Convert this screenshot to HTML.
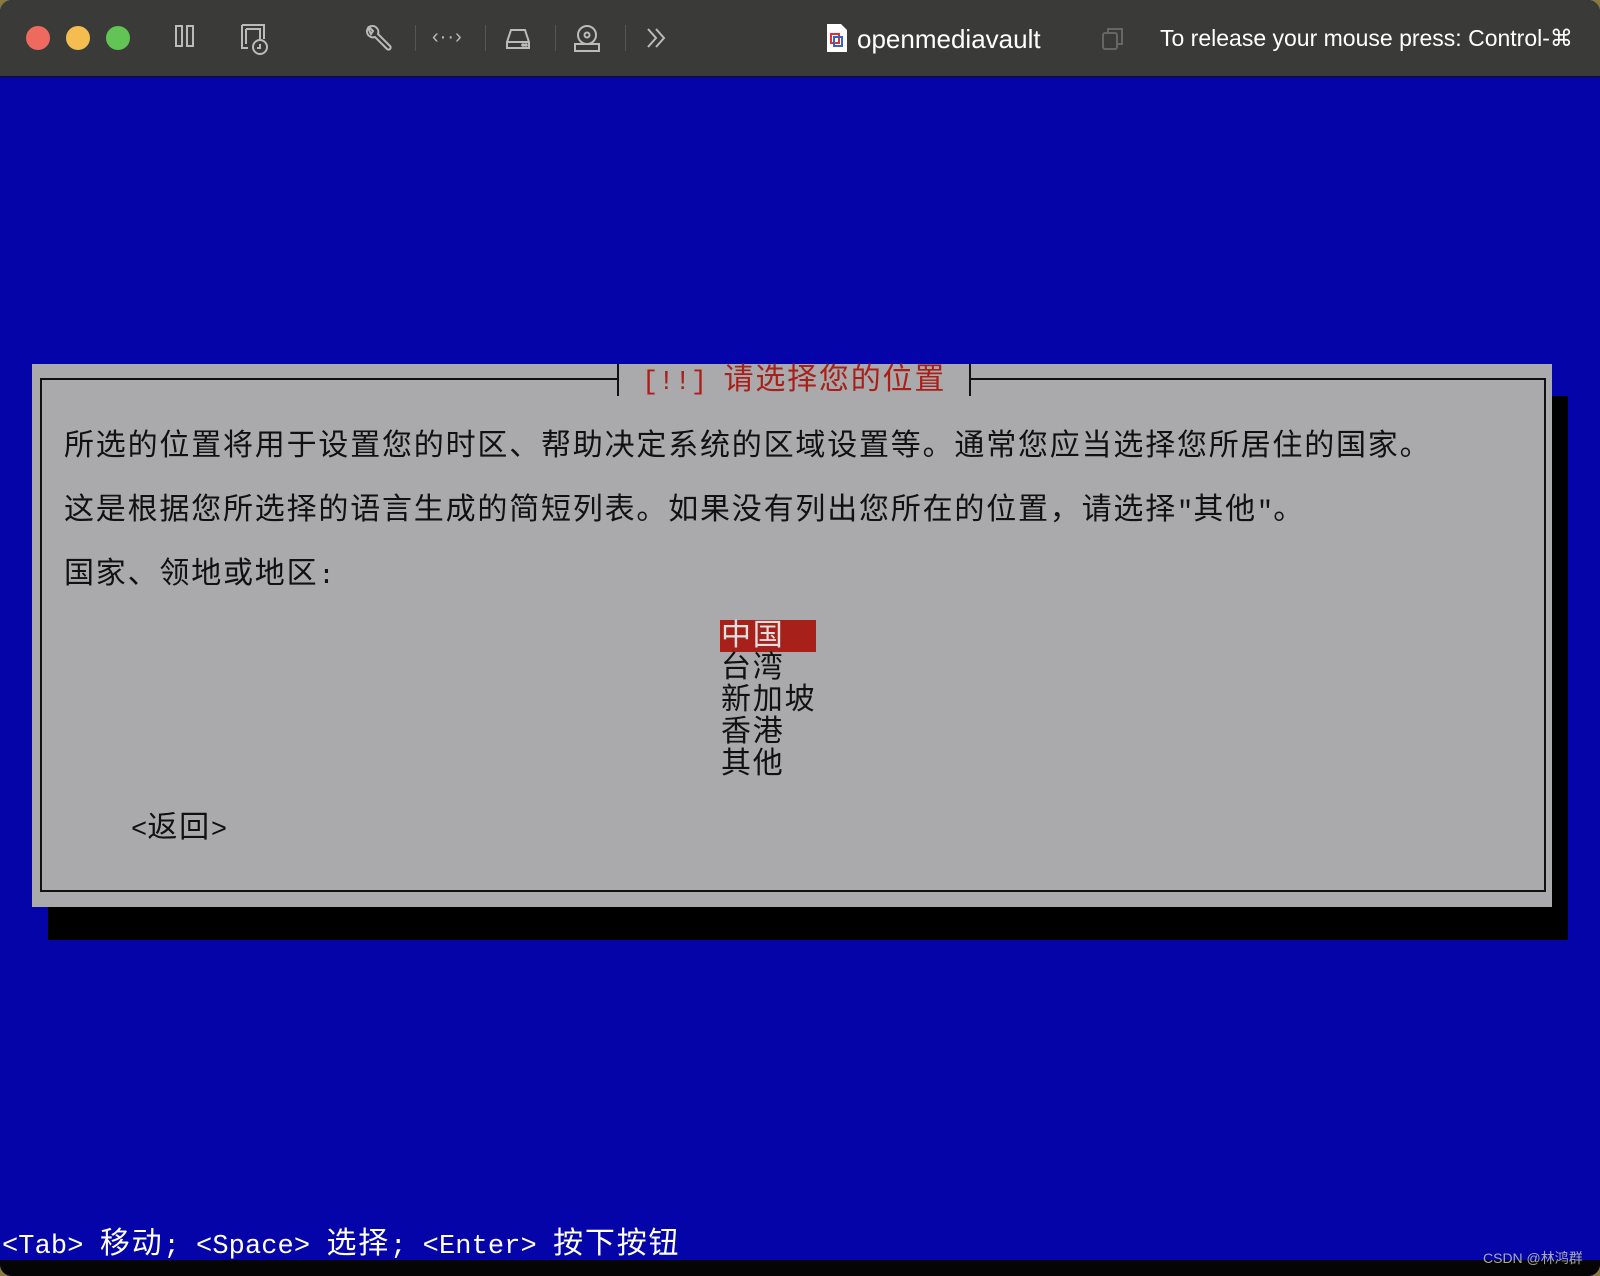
<!DOCTYPE html>
<html><head><meta charset="utf-8"><style>
html,body{margin:0;padding:0;width:1600px;height:1276px;overflow:hidden;background:#8a7a40;}
.win{position:absolute;left:0;top:0;width:1600px;height:1276px;border-radius:12px;overflow:hidden;background:#0404a8;}
.bar{position:absolute;left:0;top:0;width:1600px;height:76px;background:#3a3a39;border-bottom:1px solid #111;}
.dot{position:absolute;top:26px;width:24px;height:24px;border-radius:50%;}
.ic{position:absolute;top:22px;}
.t{position:absolute;font-family:"Liberation Sans",sans-serif;color:#fff;white-space:nowrap;}
.term{position:absolute;font-family:"Liberation Mono","WenQuanYi Zen Hei",monospace;white-space:nowrap;font-size:30px;line-height:32px;letter-spacing:1.8px;}
.l{font-size:27px;letter-spacing:0.1px;}
.sep{position:absolute;top:25px;width:1px;height:26px;background:#555;}
</style></head><body><div class="win">
<div class="bar">
<div class="dot" style="left:26px;background:#ee6a5e"></div>
<div class="dot" style="left:66px;background:#f5bd4f"></div>
<div class="dot" style="left:106px;background:#61c454"></div>
<svg class="ic" style="left:172px" width="28" height="32" viewBox="0 0 28 32" fill="none" stroke="#bbb" stroke-width="2"><rect x="4" y="4" width="6" height="20"/><rect x="15" y="4" width="6" height="20"/></svg>
<svg class="ic" style="left:240px" width="32" height="34" viewBox="0 0 32 34" fill="none" stroke="#bbb" stroke-width="2"><path d="M2 3h22v14M2 3v23h6M6 7h14v10M6 7v15"/><circle cx="20" cy="25" r="7"/><path d="M20 22v4h-3"/></svg>
<svg class="ic" style="left:362px" width="32" height="32" viewBox="0 0 32 32" fill="none" stroke="#bbb" stroke-width="2"><path d="M6 6a6 6 0 0 0 7 9l12 12a2 2 0 0 0 3-3L16 12a6 6 0 0 0-9-7l4 4-2 3z"/></svg>
<div class="sep" style="left:415px"></div>
<div class="t" style="left:432px;top:26px;color:#bbb;font-size:20px;letter-spacing:1px">‹··›</div>
<div class="sep" style="left:485px"></div>
<svg class="ic" style="left:503px" width="32" height="32" viewBox="0 0 32 32" fill="none" stroke="#bbb" stroke-width="2"><path d="M4 20l4-12h14l4 12v6H4zM4 20h22"/><circle cx="20" cy="23" r="0.8" fill="#bbb"/><circle cx="23" cy="23" r="0.8" fill="#bbb"/></svg>
<div class="sep" style="left:555px"></div>
<svg class="ic" style="left:572px" width="32" height="32" viewBox="0 0 32 32" fill="none" stroke="#bbb" stroke-width="2"><circle cx="15" cy="13" r="9"/><circle cx="15" cy="13" r="2.5"/><rect x="3" y="22" width="24" height="7"/></svg>
<div class="sep" style="left:625px"></div>
<svg class="ic" style="left:644px;top:26px" width="24" height="24" viewBox="0 0 24 24" fill="none" stroke="#bbb" stroke-width="2"><path d="M4 3l8 9-8 9M12 3l8 9-8 9"/></svg>
<svg style="position:absolute;left:826px;top:23px" width="22" height="30" viewBox="0 0 22 30"><path d="M1 1h14l6 6v22H1z" fill="#fff"/><rect x="5" y="11" width="8" height="9" fill="none" stroke="#d33" stroke-width="2"/><rect x="8" y="14" width="8" height="9" fill="none" stroke="#36c" stroke-width="2"/></svg>
<div class="t" style="left:857px;top:24px;font-size:26px">openmediavault</div>
<svg style="position:absolute;left:1100px;top:26px" width="26" height="26" viewBox="0 0 26 26" fill="none" stroke="#666" stroke-width="2"><rect x="3" y="7" width="14" height="16" rx="2"/><path d="M8 7V3h14v15h-5"/></svg>
<div class="t" style="left:1160px;top:25px;font-size:23px">To release your mouse press: Control-⌘</div>
</div>
<div style="position:absolute;left:48px;top:396px;width:1520px;height:544px;background:#000"></div>
<div style="position:absolute;left:32px;top:364px;width:1520px;height:543px;background:#aaa9ac"></div>
<div style="position:absolute;left:40px;top:378px;width:1502px;height:510px;border:2px solid #111"></div>
<div style="position:absolute;left:617px;top:364px;width:350px;height:32px;background:#aaa9ac;border-left:2px solid #111;border-right:2px solid #111"></div>
<div class="term" style="left:642px;top:366px;color:#a8201a"><span class="l">[!!] </span>请选择您的位置</div>
<div class="term" style="left:64px;top:432px;color:#111">所选的位置将用于设置您的时区、帮助决定系统的区域设置等。通常您应当选择您所居住的国家。</div>
<div class="term" style="left:64px;top:496px;color:#111">这是根据您所选择的语言生成的简短列表。如果没有列出您所在的位置，请选择<span class="l">"</span>其他<span class="l">"</span>。</div>
<div class="term" style="left:64px;top:560px;color:#111">国家、领地或地区<span class="l">:</span></div>
<div style="position:absolute;left:720px;top:620px;width:96px;height:32px;background:#a8201a"></div>
<div class="term" style="left:721px;top:622px;color:#e0e0e0">中国</div>
<div class="term" style="left:721px;top:654px;color:#111">台湾</div>
<div class="term" style="left:721px;top:686px;color:#111">新加坡</div>
<div class="term" style="left:721px;top:718px;color:#111">香港</div>
<div class="term" style="left:721px;top:750px;color:#111">其他</div>
<div class="term" style="left:131px;top:814px;color:#111"><span class="l">&lt;</span>返回<span class="l">&gt;</span></div>
<div class="term" style="left:2px;top:1230px;color:#fff"><span class="l">&lt;Tab&gt; </span>移动<span class="l">; &lt;Space&gt; </span>选择<span class="l">; &lt;Enter&gt; </span>按下按钮</div>
<div style="position:absolute;left:0;top:1260px;width:1600px;height:16px;background:#050505"></div>
<div class="t" style="left:1483px;top:1248px;font-size:14px;color:#aaa">CSDN @林鸿群</div>
</div></body></html>
